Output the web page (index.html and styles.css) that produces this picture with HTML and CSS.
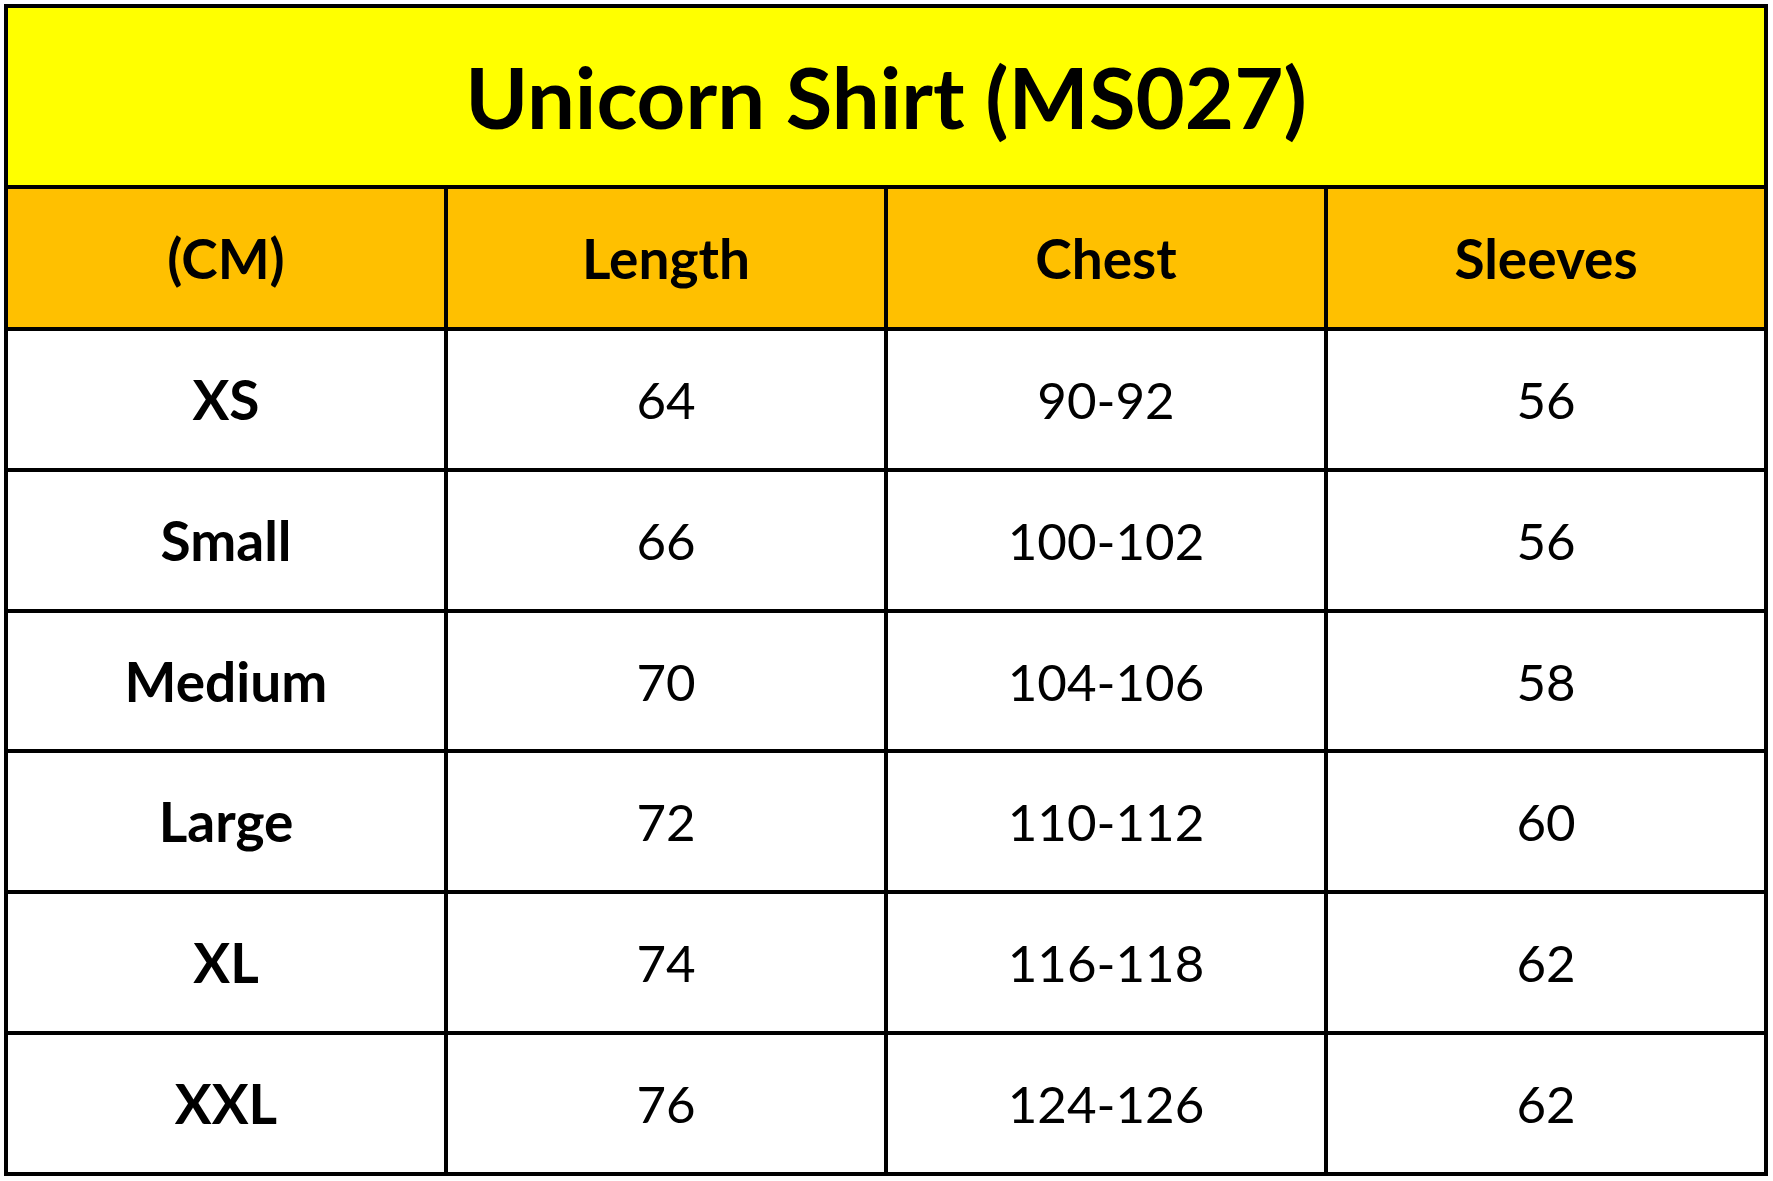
FILE: index.html
```html
<!DOCTYPE html>
<html>
<head>
<meta charset="utf-8">
<link rel="stylesheet" href="styles.css">
</head>
<body>
<div class="chart">
  <div class="cell title">Unicorn Shirt (MS027)</div>
  <div class="cell head">(CM)</div>
  <div class="cell head">Length</div>
  <div class="cell head">Chest</div>
  <div class="cell head">Sleeves</div>

  <div class="cell size">XS</div><div class="cell val">64</div><div class="cell val">90-92</div><div class="cell val">56</div>
  <div class="cell size">Small</div><div class="cell val">66</div><div class="cell val">100-102</div><div class="cell val">56</div>
  <div class="cell size">Medium</div><div class="cell val">70</div><div class="cell val">104-106</div><div class="cell val">58</div>
  <div class="cell size">Large</div><div class="cell val">72</div><div class="cell val">110-112</div><div class="cell val">60</div>
  <div class="cell size">XL</div><div class="cell val">74</div><div class="cell val">116-118</div><div class="cell val">62</div>
  <div class="cell size">XXL</div><div class="cell val">76</div><div class="cell val">124-126</div><div class="cell val">62</div>
</div>
</body>
</html>
```
FILE: styles.css
```css
html, body {
  margin: 0;
  padding: 0;
  background: #ffffff;
}
body {
  padding: 4px 0 0 4px;
  font-family: Lato, "Liberation Sans", sans-serif;
  color: #000;
}
.chart {
  width: 1764px;
  box-sizing: border-box;
  background: #000;
  padding: 4px;
  display: grid;
  grid-template-columns: repeat(4, 436px);
  grid-template-rows: 177px 138px repeat(6, 136.83px);
  gap: 4px;
}
.cell {
  display: flex;
  align-items: center;
  justify-content: center;
  background: #ffffff;
  font-size: 52px;
  line-height: 1;
}
.title {
  grid-column: 1 / span 4;
  background: #ffff00;
  font-size: 85px;
  font-weight: 700;
}
.head {
  background: #ffc000;
  font-weight: 700;
  font-size: 55px;
}
.size {
  font-weight: 700;
  font-size: 55px;
}
.val {
  font-weight: 400;
  font-size: 51px;
}
```
